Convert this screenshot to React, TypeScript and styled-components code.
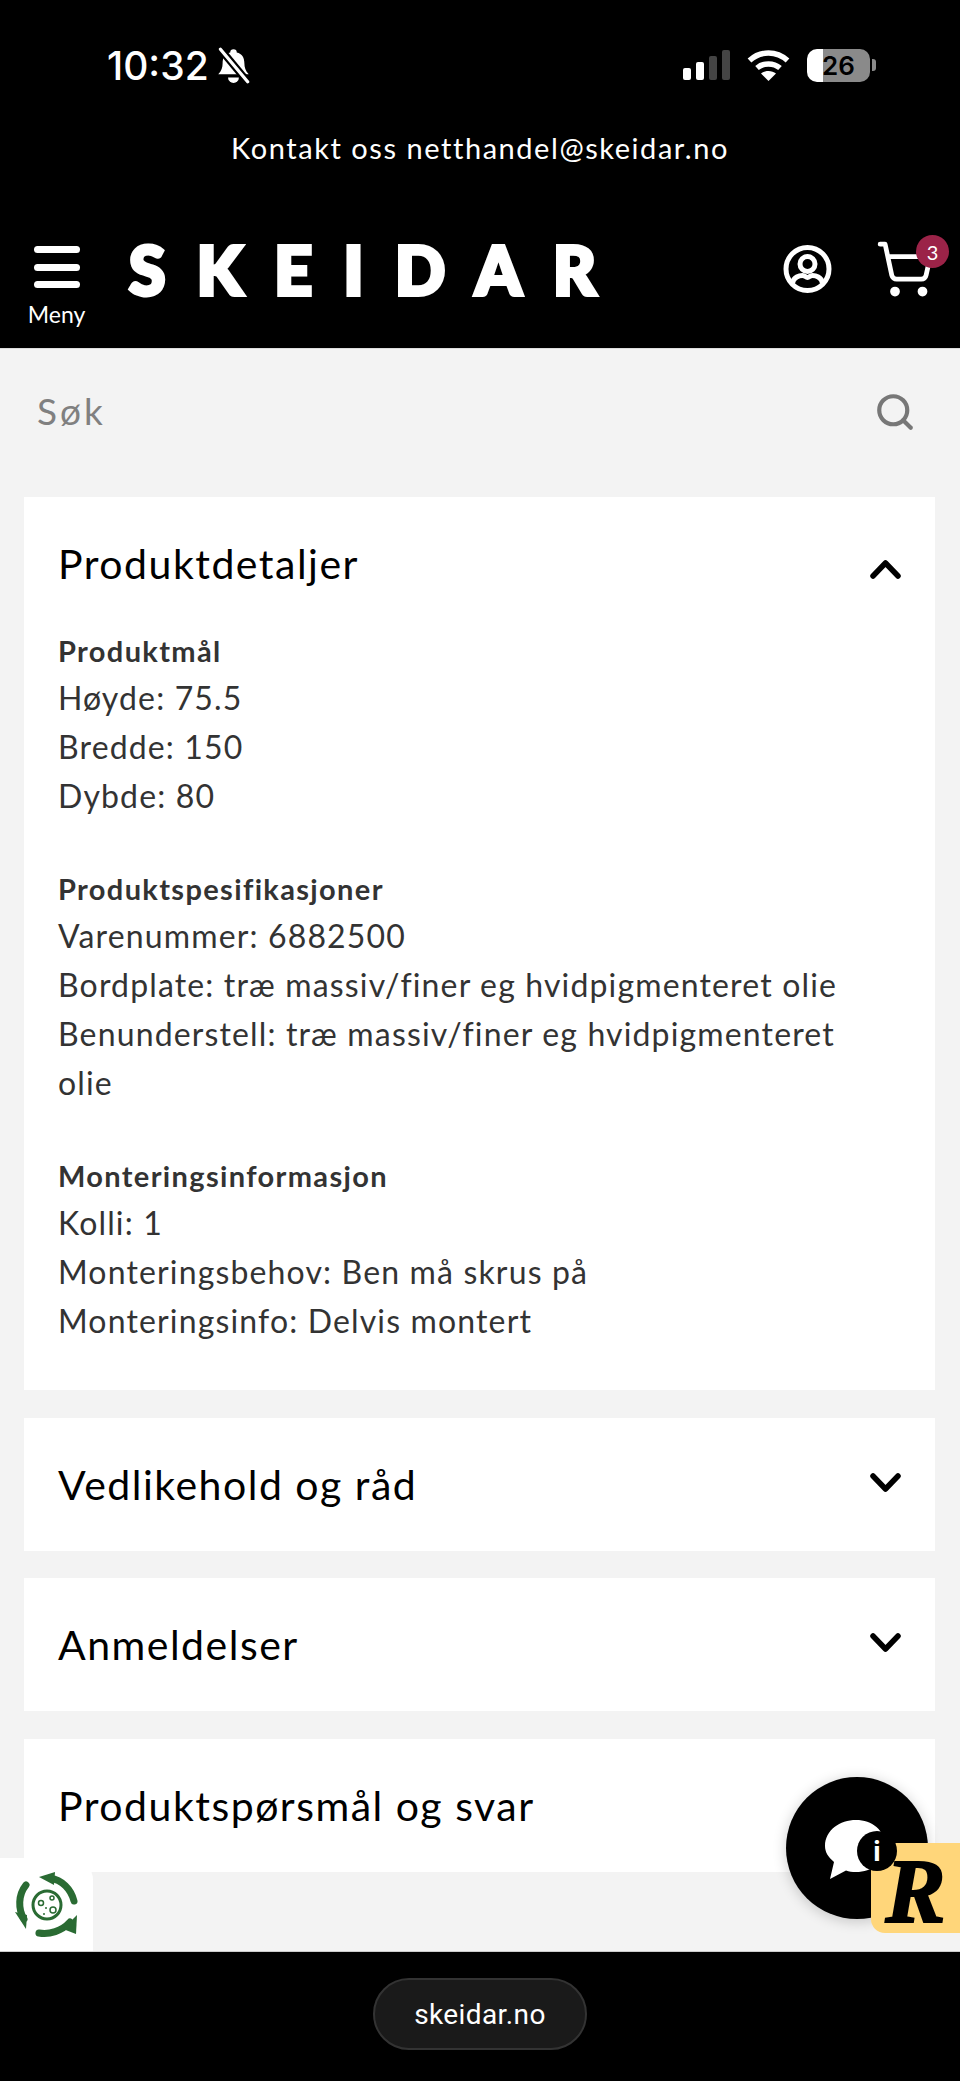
import React from 'react';
import styled, { createGlobalStyle } from 'styled-components';
import { Search, ShoppingCart } from 'lucide-react';

const GlobalStyle = createGlobalStyle`
  html, body {
    margin: 0;
    padding: 0;
    background: #f3f3f3;
  }
  * {
    box-sizing: border-box;
  }
`;

const Page = styled.div`
  position: relative;
  width: 960px;
  height: 2081px;
  overflow: hidden;
  display: flex;
  flex-direction: column;
  font-family: 'Lato', sans-serif;
  background: #f3f3f3;
`;

const Header = styled.header`
  height: 349px;
  flex-shrink: 0;
  background: #000;
  color: #fff;
  border-bottom: 1px solid #ddd;
`;

const StatusBar = styled.div`
  height: 96px;
  padding: 34px 84px 0 107px;
  display: flex;
  align-items: center;
  justify-content: space-between;
`;

const TimeGroup = styled.div`
  display: flex;
  align-items: center;
  gap: 6px;
`;

const Time = styled.span`
  font-family: 'Inter', sans-serif;
  font-size: 39px;
  font-weight: 500;
  letter-spacing: 0;
  line-height: 1;
`;

const Indicators = styled.div`
  display: flex;
  align-items: center;
  gap: 17px;
`;

const SignalBars = styled.div`
  display: flex;
  align-items: flex-end;
  gap: 5px;
  height: 30px;
`;

const SignalBar = styled.span<{ $height: number; $off?: boolean }>`
  width: 8px;
  height: ${p => p.$height}px;
  border-radius: 2px;
  background: ${p => (p.$off ? '#444' : '#fff')};
`;

const Battery = styled.div`
  position: relative;
  width: 63px;
  height: 33px;
  border-radius: 10px;
  overflow: hidden;
  background: linear-gradient(90deg, #fff 0 16px, #8a8a8a 16px);
  display: flex;
  align-items: center;
  justify-content: center;
  color: #000;
  font-family: 'Inter', sans-serif;
  font-size: 26px;
  font-weight: 600;
`;

const BatteryGroup = styled.div`
  display: flex;
  align-items: center;
  gap: 2px;
`;

const BatteryKnob = styled.span`
  width: 4px;
  height: 12px;
  border-radius: 0 3px 3px 0;
  background: #8a8a8a;
`;

const Contact = styled.div`
  margin-top: 31px;
  height: 40px;
  display: flex;
  align-items: center;
  justify-content: center;
  font-size: 29px;
  font-weight: 400;
  letter-spacing: 1.55px;
`;

const BrandRow = styled.div`
  margin-top: 79px;
  padding: 0 25px 0 28px;
  display: flex;
  align-items: flex-start;
`;

const MenuButton = styled.div`
  width: 57px;
  display: flex;
  flex-direction: column;
  align-items: center;
`;

const Burger = styled.div`
  width: 46px;
  height: 42px;
  display: flex;
  flex-direction: column;
  justify-content: space-between;
`;

const BurgerLine = styled.span`
  height: 7px;
  border-radius: 4px;
  background: #fff;
`;

const MenuLabel = styled.span`
  margin-top: 13px;
  font-size: 23px;
  line-height: 26px;
`;

const Logo = styled.div`
  margin: -9px 0 0 44px;
  font-family: 'Lato', sans-serif;
  font-size: 66px;
  font-weight: 900;
  line-height: 66px;
  letter-spacing: 31.5px;
  -webkit-text-stroke: 4px #fff;
`;

const Actions = styled.div`
  margin: -7px 0 0 auto;
  display: flex;
  align-items: center;
  gap: 43px;
`;

const CartWrap = styled.div`
  position: relative;
  width: 60px;
  height: 60px;
`;

const CartBadge = styled.span`
  position: absolute;
  top: -4px;
  right: -14px;
  width: 33px;
  height: 33px;
  border-radius: 50%;
  background: #9b2348;
  color: #fff;
  display: flex;
  align-items: center;
  justify-content: center;
  font-size: 20px;
`;

const SearchRow = styled.div`
  height: 148px;
  flex-shrink: 0;
  padding: 0 44px 26px 37px;
  display: flex;
  align-items: center;
  justify-content: space-between;
  color: #808080;
  font-size: 37px;
  letter-spacing: 3px;
`;

const SearchIcon = styled(Search)`
  margin-top: 4px;
`;

const Cards = styled.main`
  padding: 0 25px 0 24px;
  display: flex;
  flex-direction: column;
  gap: 27.7px;
`;

const Card = styled.section`
  background: #fff;
`;

const CardHead = styled.div`
  height: 133px;
  padding: 0 33px 0 34px;
  display: flex;
  align-items: center;
  justify-content: space-between;
`;

const CardTitle = styled.h2`
  margin: 0;
  color: #000;
  font-size: 41px;
  font-weight: 400;
  letter-spacing: 1.5px;
`;

const CardBody = styled.div`
  margin-top: -1px;
  padding: 0 60px 45px 34px;
  color: #333;
  font-size: 32px;
  line-height: 49px;
  letter-spacing: 1.15px;
`;

const Block = styled.div`
  & + & {
    margin-top: 47px;
  }
`;

const BlockTitle = styled.div`
  font-size: 29px;
  font-weight: 700;
  line-height: 44px;
  letter-spacing: 1.35px;
`;

const Spacer = styled.div`
  flex: 1;
`;

const BottomBar = styled.footer`
  height: 130px;
  flex-shrink: 0;
  background: #000;
  border-top: 1px solid #ccc;
  display: flex;
  justify-content: center;
  padding-top: 26px;
`;

const UrlPill = styled.div`
  width: 214px;
  height: 72px;
  border-radius: 36px;
  background: #1a1a1a;
  border: 2px solid #333;
  color: #fff;
  font-family: 'Roboto', sans-serif;
  font-size: 28px;
  letter-spacing: 0.4px;
  display: flex;
  align-items: center;
  justify-content: center;
`;

const ChatBubble = styled.div`
  position: absolute;
  left: 786px;
  top: 1777px;
  width: 142px;
  height: 142px;
  border-radius: 50%;
  background: #000;
  box-shadow: 0 2px 14px rgba(0, 0, 0, 0.2);
`;

const InfoDot = styled.span`
  position: absolute;
  left: 857px;
  top: 1831px;
  width: 40px;
  height: 40px;
  border-radius: 50%;
  background: #000;
  color: #fff;
  display: flex;
  align-items: center;
  justify-content: center;
  font-family: 'Inter', sans-serif;
  font-size: 27px;
  font-weight: 700;
`;

const ReviewBadge = styled.div`
  position: absolute;
  right: 0;
  top: 1843px;
  width: 89px;
  height: 90px;
  border-radius: 0 0 0 14px;
  background: #ffd67a;
  color: #000;
  display: flex;
  align-items: center;
  justify-content: center;
  padding-top: 8px;
  font-family: 'Liberation Serif', serif;
  font-size: 90px;
  font-style: italic;
  font-weight: 700;
  line-height: 1;
  -webkit-text-stroke: 2px #000;
`;

const EcoBadge = styled.div`
  position: absolute;
  left: 0;
  top: 1858px;
  width: 93px;
  height: 93px;
  border-radius: 0 22px 0 0;
  background: #fff;
  display: flex;
  align-items: center;
  justify-content: center;
`;

const ChevronSvg = styled.svg<{ $up?: boolean }>`
  margin: ${p => (p.$up ? '10px 0 0' : '0 0 3px')};
  flex-shrink: 0;
`;

const BellIcon = () => (
  <svg width="37" height="37" viewBox="0 0 34 34">
    <path d="M17 2a3 3 0 0 1 3 3c5 1 7 5 7 10 0 4 1 7 4 10H3c3-3 4-6 4-10 0-5 2-9 7-10a3 3 0 0 1 3-3z" fill="#fff" />
    <path d="M12 28h10a5 5 0 0 1-10 0z" fill="#fff" />
    <path d="M5 2l25 30" stroke="#000" strokeWidth="7" />
    <path d="M5 2l25 30" stroke="#fff" strokeWidth="3" strokeLinecap="round" />
  </svg>
);

const WifiIcon = () => (
  <svg width="43" height="32" viewBox="0 0 43 32" fill="none" stroke="#fff" strokeWidth="5.5">
    <path d="M2.5 11.5c11-10 27-10 38 0" />
    <path d="M10 19c6.5-5.5 16.5-5.5 23 0" />
    <path d="M21.5 32l-7.5-7.5c4-3.5 11-3.5 15 0z" fill="#fff" stroke="none" />
  </svg>
);

const UserIcon = () => (
  <svg width="49" height="48" viewBox="0 0 49 48" fill="none" stroke="#fff" strokeWidth="5">
    <circle cx="24.5" cy="24" r="21.5" />
    <circle cx="24.5" cy="19" r="7.5" />
    <path d="M9.5 38c1-6 7-7.5 10-7.5 3 0 3 2 5 2s2-2 5-2c3 0 9 1.500 10 7.500" />
  </svg>
);

const Chevron = ({ up }: { up?: boolean }) => (
  <ChevronSvg $up={up} width="33" height="20" viewBox="0 0 33 20" fill="none" stroke="#000" strokeWidth="5.5" strokeLinecap="round" strokeLinejoin="round">
    <path d={up ? 'M4 17L16.500 4 29 17' : 'M4 3l12.500 13L29 3'} />
  </ChevronSvg>
);

const SpeechIcon = () => (
  <svg width="60" height="60" viewBox="0 0 60 60" style={{ position: 'absolute', left: 39, top: 43 }}>
    <path d="M31 0c16 0 29 10 29 26S47 52 31 52c-4 0-7-.5-10-1.500L5 59l4-17C3 37 0 32 0 26 0 10 15 0 31 0z" fill="#fff" />
  </svg>
);

const EcoIcon = () => (
  <svg width="64" height="66" viewBox="0 0 64 66">
    <g fill="none" stroke="#2a6b33" strokeWidth="7" strokeLinecap="round">
      <path d="M35 6c12 2 21 11 24 23" />
      <path d="M55 50c-8 9-21 13-31 11" />
      <path d="M9 47C3 37 3 23 11 13" />
    </g>
    <g fill="#2a6b33">
      <path d="M24 5l16-5-1 13z" />
      <path d="M62 43l-1 19-13-5z" />
      <path d="M0 40l12 3-1 14z" />
    </g>
    <circle cx="32" cy="33" r="14" fill="#fff" stroke="#2a6b33" strokeWidth="3" />
    <g fill="none" stroke="#2a6b33" strokeWidth="1.500">
      <circle cx="26" cy="31" r="2.500" />
      <circle cx="37" cy="26" r="2" />
      <circle cx="38" cy="38" r="3" />
    </g>
    <circle cx="31" cy="36" r="1" fill="#2a6b33" />
    <circle cx="29" cy="42" r="1" fill="#2a6b33" />
  </svg>
);

const details = [
  {
    title: 'Produktmål',
    lines: ['Høyde: 75.5', 'Bredde: 150', 'Dybde: 80'],
  },
  {
    title: 'Produktspesifikasjoner',
    lines: [
      'Varenummer: 6882500',
      'Bordplate: træ massiv/finer eg hvidpigmenteret olie',
      'Benunderstell: træ massiv/finer eg hvidpigmenteret olie',
    ],
  },
  {
    title: 'Monteringsinformasjon',
    lines: ['Kolli: 1', 'Monteringsbehov: Ben må skrus på', 'Monteringsinfo: Delvis montert'],
  },
];

const App: React.FC = () => {
  return (
    <Page>
      <GlobalStyle />
      <Header>
        <StatusBar>
          <TimeGroup>
            <Time>10:32</Time>
            <BellIcon />
          </TimeGroup>
          <Indicators>
            <SignalBars>
              <SignalBar $height={12} />
              <SignalBar $height={18} />
              <SignalBar $height={24} $off />
              <SignalBar $height={30} $off />
            </SignalBars>
            <WifiIcon />
            <BatteryGroup>
              <Battery>26</Battery>
              <BatteryKnob />
            </BatteryGroup>
          </Indicators>
        </StatusBar>
        <Contact>Kontakt oss netthandel@skeidar.no</Contact>
        <BrandRow>
          <MenuButton>
            <Burger>
              <BurgerLine />
              <BurgerLine />
              <BurgerLine />
            </Burger>
            <MenuLabel>Meny</MenuLabel>
          </MenuButton>
          <Logo>SKEIDAR</Logo>
          <Actions>
            <UserIcon />
            <CartWrap>
              <ShoppingCart size={60} color="#fff" strokeWidth={1.9} />
              <CartBadge>3</CartBadge>
            </CartWrap>
          </Actions>
        </BrandRow>
      </Header>

      <SearchRow>
        <span>Søk</span>
        <SearchIcon size={42} color="#777" strokeWidth={2.4} />
      </SearchRow>

      <Cards>
        <Card>
          <CardHead>
            <CardTitle>Produktdetaljer</CardTitle>
            <Chevron up />
          </CardHead>
          <CardBody>
            {details.map(block => (
              <Block key={block.title}>
                <BlockTitle>{block.title}</BlockTitle>
                {block.lines.map(line => (
                  <div key={line}>{line}</div>
                ))}
              </Block>
            ))}
          </CardBody>
        </Card>
        <Card>
          <CardHead>
            <CardTitle>Vedlikehold og råd</CardTitle>
            <Chevron />
          </CardHead>
        </Card>
        <Card>
          <CardHead>
            <CardTitle>Anmeldelser</CardTitle>
            <Chevron />
          </CardHead>
        </Card>
        <Card>
          <CardHead>
            <CardTitle>Produktspørsmål og svar</CardTitle>
          </CardHead>
        </Card>
      </Cards>

      <Spacer />

      <BottomBar>
        <UrlPill>skeidar.no</UrlPill>
      </BottomBar>

      <EcoBadge>
        <EcoIcon />
      </EcoBadge>
      <ChatBubble>
        <SpeechIcon />
      </ChatBubble>
      <ReviewBadge>R</ReviewBadge>
      <InfoDot>i</InfoDot>
    </Page>
  );
};

export default App;
